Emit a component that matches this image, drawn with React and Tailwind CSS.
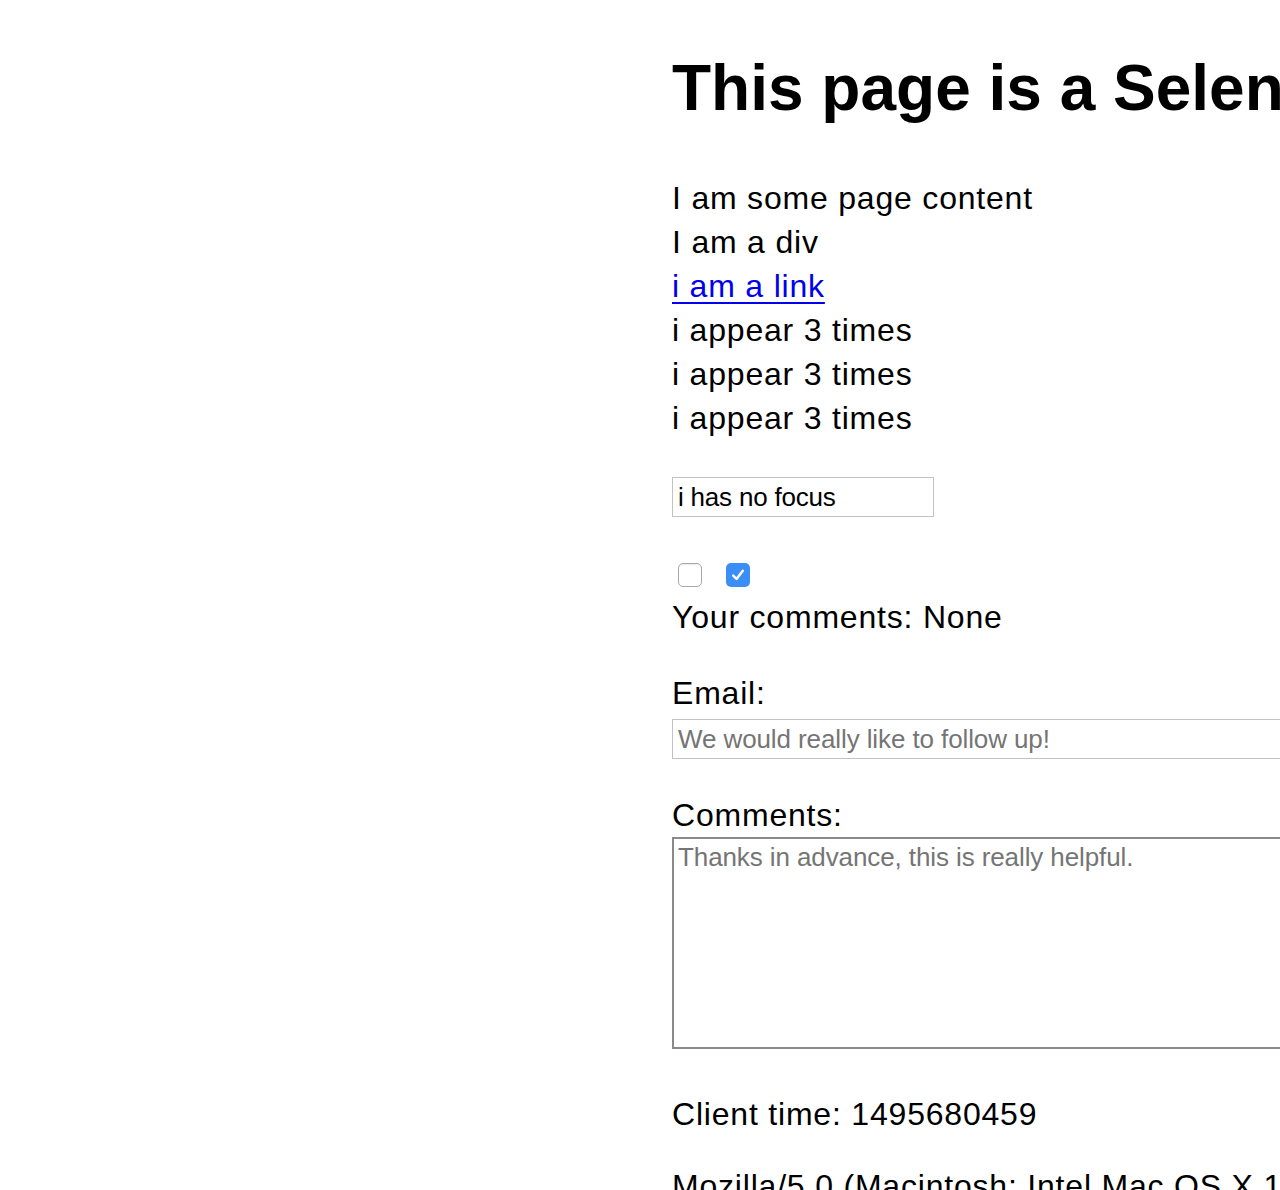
import React from "react";

export default function App() {
  return (
    <div className="w-[1280px] h-[1190px] overflow-hidden bg-white text-black font-['Liberation_Sans',Arial,sans-serif]">
      <div className="pl-[672px] w-[2200px]">
        <h1 className="pt-[43px] pb-[43px] text-[64px] font-bold leading-[90px] whitespace-nowrap">
          This page is a Selenium sandbox
        </h1>
        <div className="text-[32px] leading-[44px] tracking-[0.8px]">
          <div>I am some page content</div>
          <div>I am a div</div>
          <div>
            <a href="#" className="text-[#0000ee] underline underline-offset-[5px] decoration-[2px]">
              i am a link
            </a>
          </div>
          <div>i appear 3 times</div>
          <div>i appear 3 times</div>
          <div>i appear 3 times</div>
        </div>
        <div className="mt-[37px] w-[262px] h-[40px] border border-[#c2c2c2] flex items-center pl-[5px] text-[26px] leading-none tracking-[-0.2px]">
          i has no focus
        </div>
        <div className="mt-[46px] flex items-center gap-[24px] pl-[6px] h-[24px]">
          <span className="w-[24px] h-[24px] rounded-[5px] border-[1.5px] border-[#a8a8a8] bg-white shadow-[inset_0_1px_1px_rgba(0,0,0,0.08)]"></span>
          <span className="w-[24px] h-[24px] rounded-[5px] bg-[#3b8ef7] flex items-center justify-center">
            <svg width="16" height="16" viewBox="0 0 16 16" fill="none">
              <path d="M3.2 8.6 L6.6 12 L12.8 3.8" stroke="white" strokeWidth="2.4" strokeLinecap="round" strokeLinejoin="round" />
            </svg>
          </span>
        </div>
        <div className="mt-[8px] text-[32px] leading-[44px] tracking-[0.8px]">Your comments: None</div>
        <div className="mt-[32px] text-[32px] leading-[44px] tracking-[0.8px]">Email:</div>
        <div className="mt-[4px] w-[900px] h-[40px] border border-[#c2c2c2] flex items-center pl-[5px] text-[26px] leading-none text-[#757575] tracking-[-0.1px]">
          We would really like to follow up!
        </div>
        <div className="mt-[34px] text-[32px] leading-[44px] tracking-[0.8px]">Comments:</div>
        <div className="w-[900px] h-[212px] border-2 border-[#8a8a8a] pl-[4px] pt-[3px] text-[26px] leading-[30px] text-[#757575] tracking-[-0.1px]">
          Thanks in advance, this is really helpful.
        </div>
        <div className="mt-[43px] text-[32px] leading-[44px] tracking-[0.8px]">Client time: 1495680459</div>
        <div className="mt-[28px] text-[32px] leading-[44px] tracking-[0.8px] whitespace-nowrap">
          Mozilla/5.0 (Macintosh; Intel Mac OS X 10_12_4) AppleWebKit/537.36 (KHTML, like Gecko) Chrome/58.0.3029.110 Safari/537.36
        </div>
      </div>
    </div>
  );
}
